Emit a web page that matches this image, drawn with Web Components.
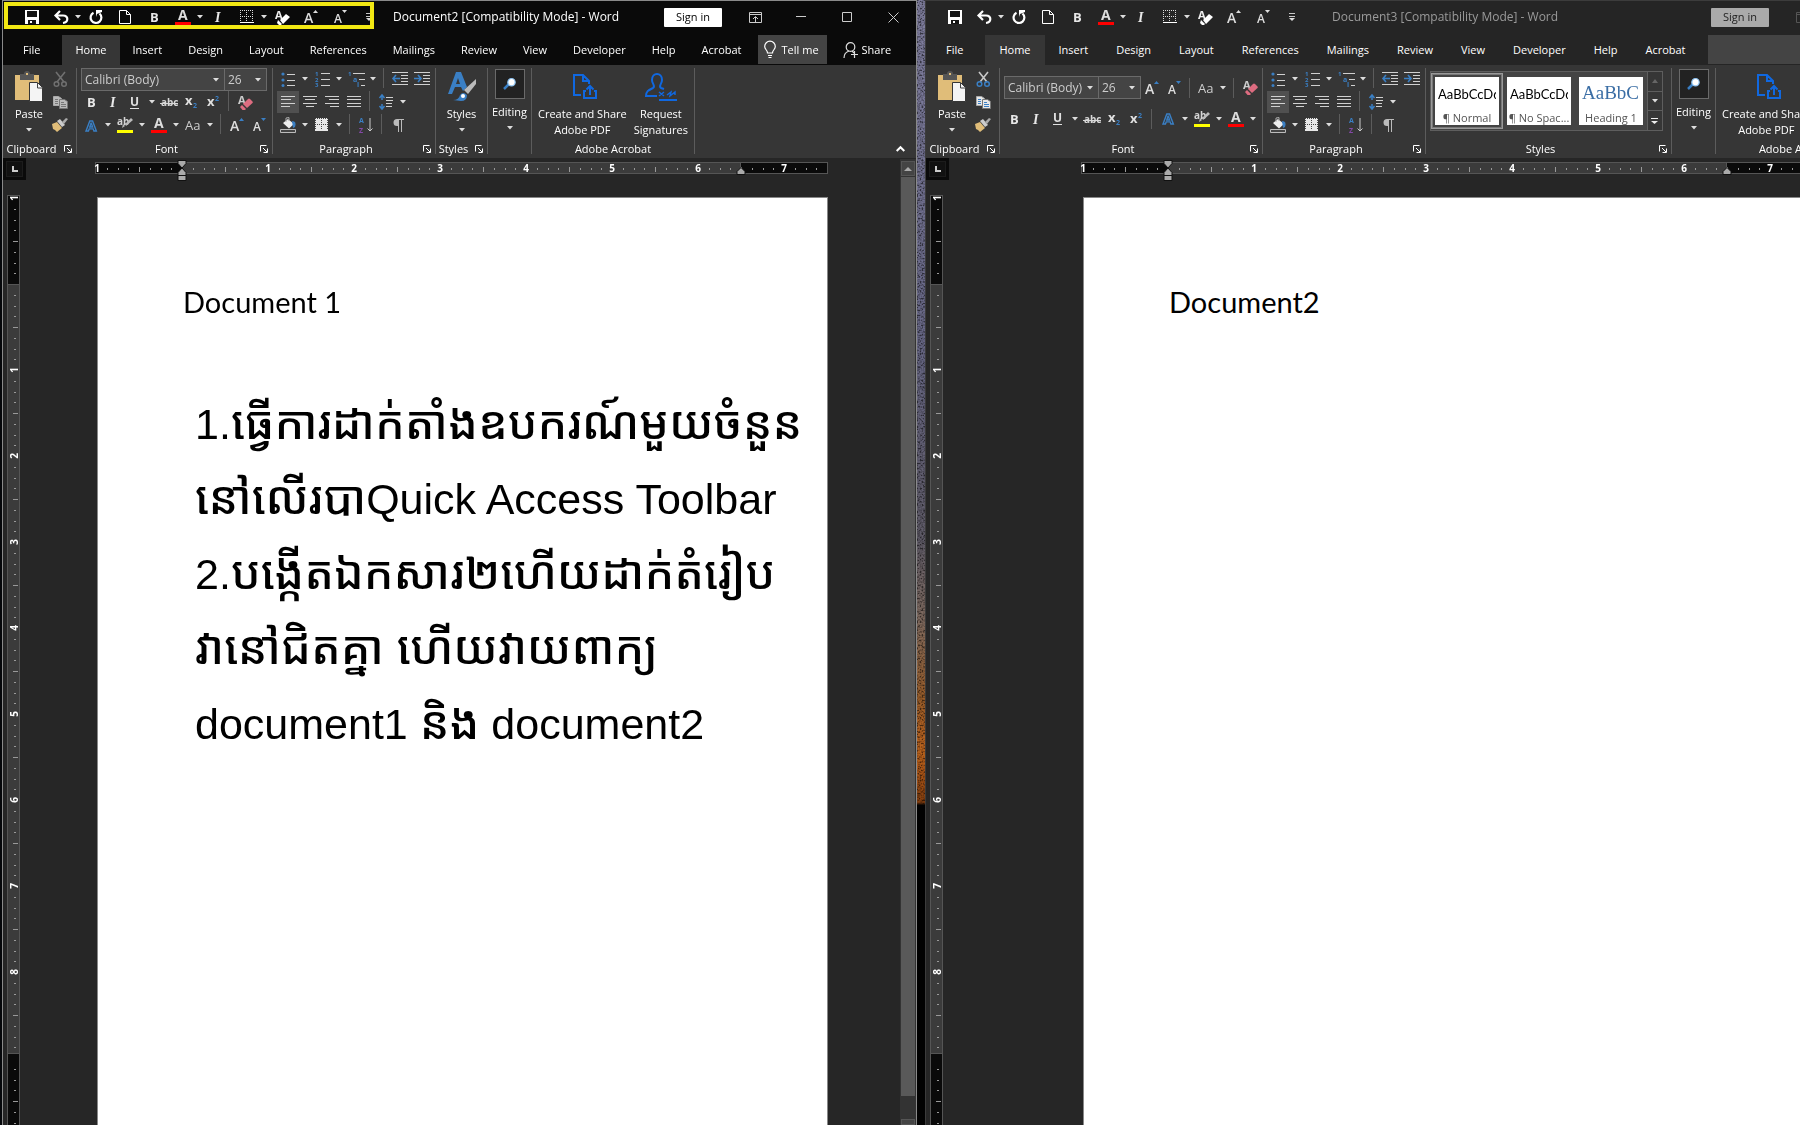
<!DOCTYPE html>
<html lang="en">
<head>
<meta charset="utf-8">
<title>Word documents side by side</title>
<style>
  html, body { margin: 0; height: 100%; }
  body { overflow: hidden; background: #05070a; font: 11px/16px "Open Sans", "Noto Sans", sans-serif; color: #fff; }
  .note span { font-size: 46px; line-height: 1px; font-weight: 500; }
</style>
</head>
<body>
<desk-top>
  <word-window slot="first" heading="Document2 [Compatibility Mode] - Word" scroll highlight>
    <doc-page>
      <p class="title">Document 1</p>
      <p class="note" lang="km">1.<span>ធ្វើការដាក់តាំងឧបករណ៍មួយចំនួន</span><br><span>នៅលើរបា</span>Quick Access Toolbar<br>2.<span>បង្កើតឯកសារ២ហើយដាក់តំរៀប</span><br><span>វានៅជិតគ្នា ហើយវាយពាក្យ</span><br>document1 <span>និង</span> document2</p>
    </doc-page>
  </word-window>
  <word-window slot="second" heading="Document3 [Compatibility Mode] - Word" inactive wide>
    <doc-page><p class="title">Document2</p></doc-page>
  </word-window>
</desk-top>

<script>
const BLUE = '#3a7fc4';
const lines = (rows, c = '#d0d0d0') => rows.map(([x, y, w]) => `<path d="M${x} ${y}h${w}" stroke="${c}"/>`).join('');
const letter = (x, y, t, s, c, extra = '') => `<text x="${x}" y="${y}" font-family="Open Sans" font-size="${s}" font-weight="700" fill="${c}" ${extra}>${t}</text>`;
const ICONS = {
  save: [14, 14, `<path d="M0 0h14v14H0z" fill="#fff"/><path d="M2 1h10v6H2zM3 10h8v4H3z" fill="#151515"/><path d="M5 11h2v2H5z" fill="#fff"/>`],
  undo: [15, 14, `<path d="M1.500 5.500H9c6 0 5.500 7 0 7.500M6 1L1.500 5.500 6 10" fill="none" stroke="#fff" stroke-width="2.200"/>`],
  redo: [14, 14, `<path d="M4.500 2.800A5.400 5.400 0 1 0 10.500 3.500" fill="none" stroke="#fff" stroke-width="2.200"/><path d="M7 0v7l1-3 5-2V0z" fill="#fff"/>`],
  newdoc: [12, 14, `<path d="M.5.5h7l4 4v9H.5zM7.500.5v4h4" fill="none" stroke="#fff"/>`],
  bold: [12, 14, letter(2, 12, 'B', 13, '#e8e8e8')],
  italic: [12, 14, letter(3, 12, 'I', 14, '#e8e8e8', 'font-style="italic" style="font-family:Liberation Serif"')],
  underline: [12, 15, letter(1, 11, 'U', 12, '#e0e0e0') + `<path d="M1 13.500h9" stroke="#e0e0e0"/>`],
  strike: [18, 14, letter(1, 11, 'abc', 10, '#d8d8d8') + `<path d="M0 8.500h18" stroke="#d8d8d8"/>`],
  sub: [14, 14, letter(1, 10, 'x', 13, '#e0e0e0') + letter(9, 13, '2', 7, BLUE)],
  sup: [14, 14, letter(1, 11, 'x', 13, '#e0e0e0') + letter(9, 6, '2', 7, BLUE)],
  fontcolor: [16, 16, letter(3, 11, 'A', 14, '#ddd') + `<path d="M0 13h16v3H0z" fill="red"/>`],
  borders: [14, 14, `<path d="M.5 0v13M6.500 0v13M12.500 0v13M0 .5h13M0 6.500h13" stroke="#ddd" stroke-dasharray="1 1"/><path d="M0 12.500h14" stroke="#fff"/>`],
  bordersfill: [14, 14, `<path d="M0 0h13v13H0z" fill="#e8e8e8"/><path d="M.5 0v12M6.500 0v12M12.500 0v12M0 .5h13M0 6.500h13" stroke="#444" stroke-dasharray="1 1"/>`],
  eraserw: [15, 15, letter(0, 9, 'A', 11, '#eee') + `<path d="M5 10l6-6 4 3-7 7zM3 10l4 4-1 1H4l-2-2z" fill="#fff"/>`],
  eraser: [15, 15, letter(0, 9, 'A', 11, '#ccc') + `<path d="M5 9l5-5q1-1 2 0l2.500 2.500q.8.8 0 1.600L9 13z" fill="#dd6c80"/><path d="M4 10l4 4-1 1H4.500L2 12z" fill="#dd6c80"/>`],
  grow: [14, 14, letter(0, 13, 'A', 14, '#ddd', 'style="font-weight:600"') + `<path d="M9 3h5l-2.500-3z" fill="var(--arrow,${BLUE})"/>`],
  shrink: [14, 14, letter(1, 13, 'A', 12, '#ddd', 'style="font-weight:600"') + `<path d="M9 0h5l-2.500 3z" fill="var(--arrow,${BLUE})"/>`],
  custom: [6, 8, `<path d="M0 .5h6M0 3.500h6" stroke="#ddd" stroke-width=".9"/><path d="M0 5h6l-3 3z" fill="#ddd"/>`],
  caret: [6, 4, `<path d="M0 0h6L3 3.500z" fill="#ddd"/>`],
  paste: [28, 30, `<path d="M0 3h24v25H0z" fill="#e0bd79"/><path d="M5 2h4a3 3 0 0 1 6 0h4v6H5z" fill="#555"/><path d="M11 1h2v2h-2z" fill="#e0bd79"/><path d="M14.500 10.500h8l5 5v14h-13z" fill="#f4f4f4" stroke="#363636"/><path d="M22.500 11v5H28" fill="none" stroke="#444"/>`],
  cut: [15, 15, `<path d="M3 0l8 10M12 0L4 10" stroke="var(--cut,#c8c8c8)" stroke-width="1.600"/><g fill="none" stroke="var(--cutring,${BLUE})" stroke-width="1.500"><circle cx="3.500" cy="12" r="2.300"/><circle cx="11" cy="12" r="2.300"/></g>`],
  copy: [15, 13, `<path d="M.5.5h5l3 2v7h-8z" fill="var(--paper,#e8e8e8)" stroke="#aaa"/><path d="M6.500 3.500h5l3 2v7h-8z" fill="var(--paper,#e8e8e8)" stroke="#777"/><path d="M2 3.500h3M2 5.500h3M2 7.500h3M8 6.500h3M8 8.500h5M8 10.500h5" stroke="var(--copy,${BLUE})"/>`],
  painter: [16, 14, `<path d="M0 6l5-2 5 6-5 4-2-2-2-1z" fill="#e0bd79"/><path d="M5 3l3-2 5 6-3 2z" fill="#ccc"/><path d="M10 4l4-4 2 1-4 5z" fill="#aaa"/>`],
  effects: [15, 15, letter(2, 13, 'A', 15, '#333', `style="stroke:${BLUE};stroke-width:1.400"`)],
  highlight: [16, 16, letter(0, 8, 'ab', 10, '#d5d5d5') + `<path d="M5 11l1-4 2 2zM8 7l6-6 2 2-7 6z" fill="#bbb"/><path d="M0 13h16v3H0z" fill="#ff0"/>`],
  aa: [17, 14, letter(0, 12, 'Aa', 13, '#ccc', 'style="font-weight:400"')],
  bullets: [14, 15, `<g fill="${BLUE}"><circle cx="2" cy="2" r="1.600"/><circle cx="2" cy="8" r="1.600"/><circle cx="2" cy="13.500" r="1.500"/></g>` + lines([[6, 2.5, 8], [6, 8.5, 8], [6, 13.5, 8]])],
  numbers: [15, 16, letter(0, 5, '1', 6, BLUE) + letter(0, 11, '2', 6, BLUE) + letter(0, 16, '3', 6, BLUE) + lines([[6, 2.5, 9], [6, 8.5, 9], [6, 14.5, 9]])],
  multi: [17, 16, letter(0, 5, '1', 6, BLUE) + letter(5, 11, 'a', 7, BLUE) + letter(9, 16, 'i', 7, BLUE) + lines([[5, 2.5, 12], [11, 8.5, 6], [13, 14.5, 4]])],
  outdent: [16, 14, lines([[0, .5, 16], [9, 3.5, 7], [9, 6.5, 7], [9, 9.5, 7], [0, 12.5, 16]]) + `<path d="M1 6.500h7M4 3L1 6.500 4 10" fill="none" stroke="${BLUE}" stroke-width="1.600"/>`],
  indent: [16, 14, lines([[0, .5, 16], [9, 3.5, 7], [9, 6.5, 7], [9, 9.5, 7], [0, 12.5, 16]]) + `<path d="M0 6.500h7M4 3l3 3.500L4 10" fill="none" stroke="${BLUE}" stroke-width="1.600"/>`],
  left: [14, 12, lines([[0, .5, 14], [0, 3.5, 10], [0, 7.5, 14], [0, 10.5, 9]])],
  center: [14, 12, lines([[0, .5, 14], [2, 3.5, 10], [0, 7.5, 14], [3, 10.5, 8]])],
  right: [14, 12, lines([[0, .5, 14], [4, 3.5, 10], [0, 7.5, 14], [5, 10.5, 9]])],
  justify: [14, 12, lines([[0, .5, 14], [0, 3.5, 14], [0, 7.5, 14], [0, 10.5, 14]])],
  spacing: [14, 16, `<path d="M3 1v5M.5 4L3 1l2.500 3M3 15v-5M.5 12L3 15l2.500-3" fill="none" stroke="${BLUE}" stroke-width="1.500"/>` + lines([[7, 3.5, 7], [7, 6.5, 7], [7, 9.5, 6], [7, 12.5, 6]])],
  shading: [17, 16, `<path d="M3 6l5-4 6 5-5 4.500z" fill="#eee"/><path d="M6 5V1l3-.5V4" fill="none" stroke="#aaa"/><path d="M12 4q5 0 3 6l-2 1z" fill="${BLUE}"/><path d="M.5 12.500h15v3H.5z" fill="#444" stroke="#bbb"/>`],
  sort: [14, 16, letter(0, 6, 'A', 7, BLUE) + letter(0, 16, 'Z', 7, '#8448a8') + `<path d="M11 1v13M8.500 11.500L11 14l2.500-2.500" fill="none" stroke="#ccc"/>`],
  pilcrow: [11, 13, `<path d="M11 0H4a3.500 3.500 0 0 0 0 7h1v6h1V1h2v12h1V1h2z" fill="#bbb"/>`],
  styles: [28, 30, `<path d="M0 22L8 0h5l6 15-4 4-2-4H7l-3 7zM8 12h4l-2-6z" fill="${BLUE}"/><path d="M16 18L28 7v5l-8 10z" fill="#bbb"/><path d="M5 28q6 0 7-5 3-4 7 0 0 6-6 6z" fill="${BLUE}"/><circle cx="15" cy="24" r="2" fill="#fff"/>`],
  find: [13, 12, `<path d="M1 11l5-5" stroke="${BLUE}" stroke-width="2.500"/><circle cx="8.500" cy="4.200" r="3.700" fill="#fff" stroke="#8ac0f0" stroke-width="1.200"/>`],
  pdf: [18, 26, `<g fill="none" stroke="#1068e0" stroke-width="2"><path d="M8 21H1V1h9l6 6v3M10 1v6h6M13 17h-2v7h12v-7h-2M17 21v-9M13.500 15.500L17 12l3.500 3.500"/></g>`],
  sign: [32, 28, `<g fill="none" stroke="#1068e0" stroke-width="2"><path d="M12 23H1c0-5 3-6 7-8 3-2-1-4-1-8 0-8 10-8 10 0 0 4-4 6-1 8l3 1"/><path d="M14 27h18"/><path d="M14 19l5 4m0-4l-5 4m8-1l4-3-1 4 5-4 0 3" stroke-width="1.400"/></g>`],
  bulb: [12, 17, `<path d="M3.500 12C3.500 9 .7 8.500.7 5.500a5.300 5.300 0 0 1 10.600 0c0 3-2.800 3.500-2.800 6.500zM4 14.500h4M4.500 16.500h3" fill="none" stroke="#fff" stroke-width="1.200"/>`],
  person: [15, 16, `<circle cx="7.500" cy="5" r="4.300" fill="none" stroke="#ddd" stroke-width="1.200"/><path d="M1 16c0-4 2-6 5-7M9 9l2 2M8 12.500h7M11.500 9v7" fill="none" stroke="#ddd" stroke-width="1.200"/>`],
  display: [13, 11, `<path d="M.5.5h12v10H.5zM0 2.500h13M6.500 10V5M4 7l2.500-2.500L9 7" fill="none" stroke="currentColor"/>`],
  min: [10, 2, `<path d="M0 .5h10" stroke="currentColor"/>`],
  max: [10, 10, `<path d="M.5.5h9v9h-9z" fill="none" stroke="currentColor"/>`],
  close: [11, 11, `<path d="M.5.5l10 10M10.500.5l-10 10" fill="none" stroke="currentColor"/>`],
  launch: [8, 8, `<path d="M.5 6.500v-6h6" fill="none" stroke="#fff"/><path d="M3 3l4 4M7.500 3.500v4h-4" fill="none" stroke="#fff"/>`],
  collapse: [9, 6, `<path d="M.7 5l3.800-3.800L8.300 5" fill="none" stroke="#fff" stroke-width="2"/>`],
  tabstop: [6, 6, `<path d="M1 0v5h5" fill="none" stroke="#ccc" stroke-width="2"/>`],
  up: [8, 4, `<path d="M0 4h8L4 0z" fill="#aaa"/>`],
  upoff: [6, 4, `<path d="M0 4h6L3 0z" fill="#666"/>`],
  more: [8, 6, `<path d="M0 .5h7" stroke="#eee"/><path d="M0 3h7L3.500 6z" fill="#eee"/>`]
};
const icon = n => { const [w, h, s] = ICONS[n]; return `<svg aria-hidden="true" width="${w}" height="${h}" viewBox="0 0 ${w} ${h}">${s}</svg>`; };
const RESET = `:host,*{box-sizing:border-box} svg{display:block;flex:none;overflow:visible} button{font:inherit;color:inherit;background:none;border:0;padding:0;margin:0;display:flex;align-items:center;justify-content:center}`;
function define(name, css, html) {
  customElements.define(name, class extends HTMLElement {
    connectedCallback() {
      if (this.shadowRoot) return;
      this.attachShadow({ mode: 'open' }).innerHTML = `<style>${RESET}${css}</style>${typeof html === 'function' ? html(this) : html}`;
    }
  });
}

define('tool-button', `
  :host{display:flex;flex:none;height:22px}
  button{width:22px;height:22px} .drop{width:12px}
  :host([active]) button:first-of-type{background:#505050}`,
  el => `<button aria-label="${el.getAttribute('label')}">${icon(el.getAttribute('icon'))}</button>${el.hasAttribute('caret') ? `<button class="drop" aria-label="${el.getAttribute('label')} options">${icon('caret')}</button>` : ''}`);

define('tool-sep', `:host{display:block;flex:none;width:1px;height:20px;margin:0 5px 0 4px;background:#5c5c5c}`, '');

define('combo-box', `
  :host{display:flex;height:23px;position:relative;flex:none;width:var(--w)}
  select{appearance:none;width:100%;height:100%;margin:0;padding:0 3px;background:#444;border:1px solid #6a6a6a;border-radius:0;color:#ccc;font:12px/16px "Open Sans",sans-serif}
  svg{position:absolute;right:6px;top:10px;pointer-events:none}`,
  el => `<select aria-label="${el.getAttribute('label')}"><option>${el.getAttribute('value')}</option></select>${icon('caret')}`);

define('ribbon-group', `
  :host{display:flex;flex-direction:column;flex:none;border-right:1px solid #5c5c5c;height:86px;width:var(--w)}
  .body{flex:1;min-height:0}
  footer{display:flex;align-items:center;height:10px}
  footer span{flex:1;text-align:center;white-space:nowrap}
  footer button{width:16px;height:14px}`,
  el => `<div class="body"><slot></slot></div>${el.hasAttribute('label') ? `<footer><span>${el.getAttribute('label')}</span>${el.hasAttribute('launch') ? `<button aria-label="${el.getAttribute('label')} settings">${icon('launch')}</button>` : ''}</footer>` : ''}`);

define('big-button', `
  :host{display:block;flex:none}
  button{flex-direction:column;justify-content:flex-start;width:100%;white-space:nowrap}
  .pic{display:flex;align-items:center;justify-content:center;height:38px}
  :host([boxed]) .pic{width:30px;height:30px;border:1px solid #6a6a6a;background:#222;margin:1px 0 5px}
  .caret{height:16px;display:flex;align-items:center}`,
  el => `<button><span class="pic">${icon(el.getAttribute('icon'))}</span>${el.getAttribute('label').split('|').map(t => `<span>${t}</span>`).join('')}${el.hasAttribute('caret') ? `<span class="caret">${icon('caret')}</span>` : ''}</button>`);

define('style-gallery', `
  :host{display:flex;width:233px;height:60px;background:#444;border:1px solid #5e5e5e}
  .cell{width:72px;padding:3px;height:56px;margin-top:1px;border:1px solid transparent}
  .cell.on{border:1px solid #999;outline:1px solid #777;outline-offset:-2px}
  .card{width:64px;height:48px;background:#fff;color:#555;flex-direction:column;justify-content:flex-start;overflow:hidden}
  .card b{font:400 13px/16px Lato,sans-serif;color:#000;height:33px;padding-top:9px;width:58px;overflow:hidden;white-space:nowrap;text-align:left}
  .card b.h{font:400 19px/20px "Liberation Serif",serif;color:#3b6ea5;padding-top:6px}
  .card span{white-space:nowrap;line-height:15px}
  nav{width:15px;display:flex;flex-direction:column;border-left:1px solid #5e5e5e;background:#363636}
  nav button{flex:1} nav button+button{border-top:1px solid #5e5e5e}`,
  `<div class="cell on"><button class="card"><b>AaBbCcDd</b><span>¶ Normal</span></button></div>
   <div class="cell"><button class="card"><b>AaBbCcDd</b><span>¶ No Spac...</span></button></div>
   <div class="cell"><button class="card"><b class="h">AaBbC</b><span>Heading 1</span></button></div>
   <nav><button aria-label="Previous styles">${icon('upoff')}</button><button aria-label="Next styles">${icon('caret')}</button><button aria-label="All styles">${icon('more')}</button></nav>`);

const t = (i, l, x = '') => `<tool-button icon="${i}" label="${l}" ${x}></tool-button>`;
const S = '<tool-sep></tool-sep>';

define('quick-access', `
  :host{display:flex;flex:none;align-items:center;padding-left:18px;--arrow:#ddd}
  tool-button{margin-right:7px} tool-button[caret]{margin-right:1px}`,
  t('save', 'Save') + t('undo', 'Undo', 'caret') + t('redo', 'Repeat') + t('newdoc', 'New') + t('bold', 'Bold') + t('fontcolor', 'Font colour', 'caret') + t('italic', 'Italic') + t('borders', 'Borders', 'caret') + t('eraserw', 'Clear formatting') + t('grow', 'Grow font') + t('shrink', 'Shrink font') + t('custom', 'Customise toolbar'));

define('word-ribbon', `
  :host{display:flex;background:#363636;height:93px;padding-top:3px;position:relative}
  .row{display:flex;align-items:flex-start;height:23px}
  .font{padding-left:3px;--w:144px} .font .size{--w:43px}
  .font combo-box:first-child{margin-left:1px} .font .size{margin-left:-1px}
  :host([wide]) .font{padding-top:4px;--w:95px}
  :host([wide]) .font .row{height:31px;align-items:center}
  .para{padding-left:4px}
  .clip{display:flex;padding-left:8px;gap:2px} .clip big-button{width:36px} .clip .row{width:22px}
  :host(:not([wide])) .clip{--cut:#707070;--cutring:#707070;--copy:#777;--paper:#bbb}
  .styles{padding:3px 4px 0}
  .adobe{display:flex;justify-content:space-between;padding:0 6px}
  .collapse{position:absolute;right:10px;bottom:4px;width:11px;height:10px}`,
  el => {
    const wide = el.hasAttribute('wide');
    const chars = t('bold', 'Bold') + t('italic', 'Italic') + t('underline', 'Underline', 'caret') + t('strike', 'Strikethrough') + t('sub', 'Subscript') + t('sup', 'Superscript');
    const paint = t('effects', 'Text effects', 'caret') + t('highlight', 'Highlight', 'caret') + t('fontcolor', 'Font colour', 'caret');
    const grow = t('grow', 'Grow font') + t('shrink', 'Shrink font');
    const combos = '<combo-box label="Font" value="Calibri (Body)"></combo-box><combo-box class="size" label="Font size" value="26"></combo-box>';
    return `
    <ribbon-group label="Clipboard" launch style="--w:74px"><div class="clip"><big-button icon="paste" label="Paste" caret></big-button><div><div class="row">${t('cut', 'Cut')}</div><div class="row">${t('copy', 'Copy')}</div><div class="row">${t('painter', 'Format painter')}</div></div></div></ribbon-group>
    <ribbon-group label="Font" launch style="--w:${wide ? 263 : 196}px"><div class="font">${wide
      ? `<div class="row">${combos}${grow}${S}${t('aa', 'Change case', 'caret')}${S}${t('eraser', 'Clear formatting')}</div><div class="row">${chars}${S}${paint}</div>`
      : `<div class="row">${combos}</div><div class="row">${chars}${S}${t('eraser', 'Clear formatting')}</div><div class="row">${paint}${t('aa', 'Change case', 'caret')}${S}${grow}</div>`}</div></ribbon-group>
    <ribbon-group label="Paragraph" launch style="--w:163px"><div class="para">
      <div class="row">${t('bullets', 'Bullets', 'caret')}${t('numbers', 'Numbering', 'caret')}${t('multi', 'Multilevel list', 'caret')}${S}${t('outdent', 'Decrease indent')}${t('indent', 'Increase indent')}</div>
      <div class="row">${t('left', 'Align left', 'active')}${t('center', 'Centre')}${t('right', 'Align right')}${t('justify', 'Justify')}${S}${t('spacing', 'Line spacing', 'caret')}</div>
      <div class="row">${t('shading', 'Shading', 'caret')}${t('bordersfill', 'Borders', 'caret')}${S}${t('sort', 'Sort')}${S}${t('pilcrow', 'Show marks')}</div></div></ribbon-group>
    <ribbon-group label="Styles" launch style="--w:${wide ? 246 : 52}px">${wide ? '<div class="styles"><style-gallery></style-gallery></div>' : '<big-button icon="styles" label="Styles" caret></big-button>'}</ribbon-group>
    <ribbon-group style="--w:44px"><big-button icon="find" label="Editing" caret boxed></big-button></ribbon-group>
    <ribbon-group label="Adobe Acrobat" style="--w:163px"><div class="adobe"><big-button icon="pdf" label="Create and Share|Adobe PDF"></big-button><big-button icon="sign" label="Request|Signatures"></big-button></div></ribbon-group>
    ${wide ? '' : `<button class="collapse" aria-label="Collapse the ribbon">${icon('collapse')}</button>`}`;
  });

define('page-ruler', `
  :host{display:block;flex:none} text{font:700 10px "Open Sans",sans-serif;fill:#fff;text-anchor:middle}`,
  el => {
    const v = el.hasAttribute('vertical'), inch = 86, len = v ? 948 : 733, zero = v ? 89 : 87, end = zero + inch * (v ? 9 : 6.5) - (v ? 4 : 0);
    const rect = (a, b, fill) => v ? `<rect x=".5" y="${a + .5}" width="12" height="${b - a - 1}" fill="${fill}" stroke="#555"/>` : `<rect x="${a + .5}" y=".5" width="${b - a - 1}" height="11" fill="${fill}" stroke="#555"/>`;
    let s = rect(0, len, '#0a0a0a') + rect(zero, end, '#3b3b3b');
    for (let k = -8; ; k++) {
      const p = Math.round(zero + k * inch / 8);
      if (p > len - 4) break;
      if (k === 0) continue;
      if (k % 8 === 0) {
        if (v && p > end - 8) continue;
        const q = Math.max(p, 2), n = Math.abs(k / 8);
        s += v ? `<text transform="translate(11 ${q}) rotate(-90)">${n}</text>` : `<text x="${q}" y="10">${n}</text>`;
      } else {
        const tall = k % 4 === 0;
        s += v ? `<path d="M${tall ? 6 : 7} ${p + .5}h${tall ? 5 : 2}" stroke="#999"/>` : `<path d="M${p + .5} ${tall ? 5 : 6}v${tall ? 5 : 2}" stroke="#999"/>`;
      }
    }
    if (!v) s += `<g fill="#aaa" stroke="#111"><path d="M${zero - 4}-1.500h8v3L${zero} 6l-4-4.500zM${zero - 4} 13.500v-3L${zero} 6l4 4.500v3zM${zero - 4} 13.500h8v5h-8z"/><path d="M${end - 4} 12.500v-3L${end} 5.500l4 4v3z"/></g>`;
    return v ? `<svg width="13" height="${len}">${s}</svg>` : `<svg width="${len}" height="12">${s}</svg>`;
  });

define('scroll-bar', `
  :host{display:flex;flex-direction:column;flex:none;width:16px;background:#333;padding:2px 1px 0;gap:1px}
  button{height:15px;background:#444;border:1px solid #555;flex:none}
  i{flex:1;background:#595959} .end{margin-top:22px;height:6px}`,
  `<button aria-label="Scroll up">${icon('up')}</button><i></i><button class="end" aria-label="Scroll down"></button>`);

define('doc-page', `
  :host{display:block;flex:none;width:731px;background:#fff;border:1px solid #888;border-bottom:0;color:#000;padding:84px 0 0 85px}
  ::slotted(p){margin:0;white-space:nowrap}
  ::slotted(.title){font:29px/40px Lato,sans-serif}
  ::slotted(.note){margin:65px 0 0 12px !important;font:43px/75px "Liberation Sans","Noto Sans Khmer",sans-serif}`, '<slot></slot>');

define('word-window', `
  :host{display:flex;flex-direction:column;height:100%;min-width:0;background:#262626;border:1px solid #8a8a8a;border-bottom:0;--bar:#0a0a0a;--dim:#fff;--pad:13px;--page:94px;position:relative}
  :host([wide]){min-width:1039px;border-color:#3c3c3c;--bar:#252525;--dim:#9a9a9a;--page:157px;--pad:14px}
  .title{display:flex;align-items:center;height:34px;padding-bottom:2px;background:var(--bar);color:var(--dim)}
  .title h1{font:12px/16px "Open Sans",sans-serif;margin:0 0 0 6px;flex:1;white-space:pre}
  :host([wide]) h1{margin-left:22px}
  quick-access{color:#fff}
  .sign{width:58px;height:19px;background:#fff;color:#000;margin-right:10px;border-radius:1px}
  :host([inactive]) .sign{background:#aaa;color:#222}
  .win{width:46px;height:30px;color:#ccc} :host([inactive]) .win{color:#555}
  .tabs{display:flex;height:30px;background:var(--bar)}
  .tabs button{padding:0 var(--pad);height:30px;white-space:nowrap} .tabs .file{padding:0 22px 0 20px}
  .tabs .on{background:#363636}
  .tabs .tell{background:#444;height:29px;padding:0 8px 0 6px;gap:6px;margin-left:3px} .tabs .share{gap:4px;padding:0 16px}
  :host([wide]) .tell{margin-left:8px;flex:1}
  .work{display:flex;flex:1;min-height:0;overflow:hidden}
  .main{flex:1;min-width:0}
  .top{display:flex;height:37px} .stop{width:23px;height:22px;border:3px solid #0a0a0a;background:#111;outline:1px solid #1c1c1c;outline-offset:-4px;flex:none}
  .top page-ruler{margin:4px 0 0 calc(var(--page) - 25px)}
  .sheet{display:flex;align-items:stretch;height:100%}
  .sheet page-ruler{margin-left:4px}
  ::slotted(doc-page){margin:2px 0 0 calc(var(--page) - 17px)}
  scroll-bar{margin-top:1px}
  .mark{position:absolute;left:1px;top:1px;width:370px;height:27px;border:4px solid #f2e813;pointer-events:none}`,
  el => {
    const wide = el.hasAttribute('wide');
    const tab = n => `<button role="tab" class="${n === 'File' ? 'file' : n === 'Home' ? 'on' : ''}">${n}</button>`;
    return `<header class="title"><quick-access></quick-access><h1>${el.getAttribute('heading')}</h1><button class="sign">Sign in</button>${[['display', 'Ribbon display'], ['min', 'Minimise'], ['max', 'Maximise'], ['close', 'Close']].map(([i, l]) => `<button class="win" aria-label="${l}">${icon(i)}</button>`).join('')}</header>
    <nav class="tabs">${['File', 'Home', 'Insert', 'Design', 'Layout', 'References', 'Mailings', 'Review', 'View', 'Developer', 'Help', 'Acrobat'].map(tab).join('')}${wide ? '<button class="tell" aria-label="Tell me"></button>' : `<button class="tell">${icon('bulb')}Tell me</button><button class="share">${icon('person')}Share</button>`}</nav>
    <word-ribbon ${wide ? 'wide' : ''}></word-ribbon>
    <section class="work"><div class="main"><div class="top"><button class="stop" aria-label="Tab stop">${icon('tabstop')}</button><page-ruler></page-ruler></div><div class="sheet"><page-ruler vertical></page-ruler><slot></slot></div></div>${el.hasAttribute('scroll') ? '<scroll-bar></scroll-bar>' : ''}</section>
    ${el.hasAttribute('highlight') ? '<div class="mark"></div>' : ''}`;
  });

define('desk-top', `
  :host{display:grid;grid-template-columns:2px minmax(0,915fr) 8px minmax(0,875fr);grid-template-rows:100%;height:100vh;overflow:hidden}
  .wall{background:linear-gradient(#5c5b72 0,#4a4a60 30%,#44414a 48%,#5b4c44 55%,#6e431e 62%,#8a4714 67%,#5e2c0a 71.300%,#020202 71.600%)}
  .wall svg{width:8px;height:804px;mix-blend-mode:overlay;opacity:.4;overflow:hidden}`,
  `<span></span><slot name="first"></slot><div class="wall"><svg><filter id="n" x="0" y="0" width="1" height="1"><feTurbulence type="fractalNoise" baseFrequency=".6"/><feColorMatrix values="0 3 0 0 -1 0 3 0 0 -1 0 3 0 0 -1 0 0 0 0 1"/></filter><rect width="100%" height="100%" filter="url(#n)"/></svg></div><slot name="second"></slot>`);
</script>
</body>
</html>
